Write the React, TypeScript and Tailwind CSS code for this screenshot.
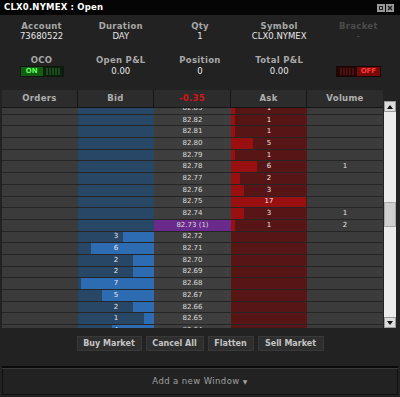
import React from 'react';

type Row = { price: string; bid?: number; ask?: number; vol?: number; last?: boolean };

const ROWS: Row[] = [
  { price: '82.83', ask: 1 },
  { price: '82.82', ask: 1 },
  { price: '82.81', ask: 1 },
  { price: '82.80', ask: 5 },
  { price: '82.79', ask: 1 },
  { price: '82.78', ask: 6, vol: 1 },
  { price: '82.77', ask: 2 },
  { price: '82.76', ask: 3 },
  { price: '82.75', ask: 17 },
  { price: '82.74', ask: 3, vol: 1 },
  { price: '82.73 (1)', ask: 1, vol: 2, last: true },
  { price: '82.72', bid: 3 },
  { price: '82.71', bid: 6 },
  { price: '82.70', bid: 2 },
  { price: '82.69', bid: 2 },
  { price: '82.68', bid: 7 },
  { price: '82.67', bid: 5 },
  { price: '82.66', bid: 2 },
  { price: '82.65', bid: 1 },
  { price: '82.64', bid: 4 },
];

const BUTTONS = [
  { label: 'Buy Market', w: 'w-[65px]' },
  { label: 'Cancel All', w: 'w-[58px]' },
  { label: 'Flatten', w: 'w-[46px]' },
  { label: 'Sell Market', w: 'w-[66px]' },
];

const Info: React.FC<{ label: string; value: React.ReactNode; dim?: boolean }> = ({ label, value, dim }) => (
  <div className="flex flex-col items-center">
    <div className={`h-[10px] leading-[10px] text-[8.5px] font-bold tracking-[0.3px] ${dim ? 'text-[#4a4a4a]' : 'text-[#a8a8a8]'}`}>{label}</div>
    <div className={`h-[10px] leading-[10px] text-[8.5px] ${dim ? 'text-[#5a5a5a]' : 'text-[#e6e6e6]'}`}>{value}</div>
  </div>
);

const Info2: React.FC<{ label: string; children: React.ReactNode }> = ({ label, children }) => (
  <div className="flex flex-col items-center">
    <div className="h-[10px] leading-[10px] text-[8.5px] font-bold tracking-[0.3px] text-[#a8a8a8]">{label}</div>
    <div className="h-[11px] mt-px flex items-center text-[8.5px] text-[#e6e6e6]">{children}</div>
  </div>
);

const Stripes: React.FC<{ color: string }> = ({ color }) => (
  <div className="flex-1 flex items-center justify-center gap-[1px]">
    {[0, 1, 2, 3, 4].map(i => (
      <span key={i} className="w-[2px] h-[7px]" style={{ background: color }} />
    ))}
  </div>
);

const ScrollArrow: React.FC<{ down?: boolean }> = ({ down }) => (
  <div className="h-[11px] w-[12px] shrink-0 bg-[#dcdcdc] border border-[#9a9a9a] flex items-center justify-center">
    <svg width="6" height="4" viewBox="0 0 6 4">
      {down ? <polygon points="0,0 6,0 3,4" fill="#111" /> : <polygon points="0,4 6,4 3,0" fill="#111" />}
    </svg>
  </div>
);

export default function App() {
  return (
    <div className="w-[400px] h-[397px] bg-[#222222] flex flex-col overflow-hidden" style={{ fontFamily: '"DejaVu Sans", Verdana, sans-serif' }}>
      {/* Title */}
      <div className="h-[15px] bg-[#050505] flex items-center justify-between pl-[4px] pr-[6px]">
        <span className="text-[8.5px] font-bold text-white tracking-[0.2px]">CLX0.NYMEX : Open</span>
        <div className="flex gap-[1px]">
          <svg width="8" height="8" viewBox="0 0 8 8">
            <rect x="0" y="0" width="8" height="8" fill="#9a9a9a" />
            <rect x="2" y="2" width="4" height="4" fill="#222" />
            <rect x="3" y="3" width="2" height="2" fill="#9a9a9a" />
          </svg>
          <svg width="8" height="8" viewBox="0 0 8 8">
            <rect x="0" y="0" width="8" height="8" fill="#9a9a9a" />
            <path d="M2 2 L6 6 M6 2 L2 6" stroke="#222" strokeWidth="1.4" />
          </svg>
        </div>
      </div>

      {/* Info */}
      <div className="px-[2px] pt-[6px]">
        <div className="grid grid-cols-5">
          <Info label="Account" value="73680522" />
          <Info label="Duration" value="DAY" />
          <Info label="Qty" value="1" />
          <Info label="Symbol" value="CLX0.NYMEX" />
          <Info label="Bracket" value="-" dim />
        </div>
        <div className="grid grid-cols-5 mt-[14px]">
          <Info2 label="OCO">
            <div className="w-[44px] h-[11px] flex border border-[#0b1a0b]">
              <div className="w-[22px] bg-[#145e14] text-[7px] font-bold text-[#5cff5c] flex items-center justify-center">ON</div>
              <div className="flex-1 bg-[#0c1f0c] flex"><Stripes color="#1e4a1e" /></div>
            </div>
          </Info2>
          <Info2 label="Open P&L">0.00</Info2>
          <Info2 label="Position">0</Info2>
          <Info2 label="Total P&L">0.00</Info2>
          <Info2 label="">
            <div className="w-[45px] h-[11px] flex border border-[#1a0505]">
              <div className="flex-1 bg-[#250606] flex"><Stripes color="#4a1010" /></div>
              <div className="w-[23px] bg-[#7a0a0a] text-[7px] font-bold text-[#ff3a3a] flex items-center justify-center">OFF</div>
            </div>
          </Info2>
        </div>
      </div>

      {/* Ladder */}
      <div className="mt-[13px] flex pl-[2px]">
        <div className="w-[381px] flex flex-col">
          <div className="h-[17px] flex bg-[#2c2c2c] text-[8.5px] font-bold tracking-[0.3px] text-[#b0b0b0]">
            <div className="w-[76px] flex items-center justify-center border-r border-[#161616]">Orders</div>
            <div className="w-[76px] flex items-center justify-center border-r border-[#161616]">Bid</div>
            <div className="w-[77px] flex items-center justify-center border-r border-[#161616] text-[#d41414]">-0.35</div>
            <div className="w-[76px] flex items-center justify-center border-r border-[#161616]">Ask</div>
            <div className="w-[76px] flex items-center justify-center">Volume</div>
          </div>
          <div className="h-[221px] overflow-hidden border-t border-[#151515]">
            <div className="-mt-[5px]">
              {ROWS.map(r => (
                <div key={r.price} className="h-[11.7px] flex text-[7px] leading-none border-b border-[#252525]">
                  <div className="w-[76px] bg-[#3b3b3b]" />
                  <div className="w-[76px] bg-[#284766] relative flex justify-end">
                    {r.bid ? (
                      <>
                        <div className="h-full bg-[#2d6cb3]" style={{ width: r.bid * 10.5 }} />
                        <span className="absolute inset-0 flex items-center justify-center text-[#e8e8e8]">{r.bid}</span>
                      </>
                    ) : null}
                  </div>
                  <div className={`w-[77px] flex items-center justify-center text-[#dcdcdc] ${r.last ? 'bg-[#6a2a8c]' : 'bg-[#3e3e3e]'}`}>{r.price}</div>
                  <div className="w-[76px] bg-[#581515] relative flex">
                    {r.ask ? (
                      <>
                        <div className="h-full bg-[#9a0f0f]" style={{ width: Math.min(r.ask * 4.4, 76) }} />
                        <span className="absolute inset-0 flex items-center justify-center text-[#e8e8e8]">{r.ask}</span>
                      </>
                    ) : null}
                  </div>
                  <div className="w-[76px] bg-[#3b3b3b] flex items-center justify-center text-[#e8e8e8]">{r.vol ?? ''}</div>
                </div>
              ))}
            </div>
          </div>
        </div>
        <div className="ml-px mt-[11px] h-[227px] w-[12px] bg-[#ececec] flex flex-col">
          <ScrollArrow />
          <div className="h-[90px] shrink-0" />
          <div className="h-[25px] shrink-0 bg-[#cfcfcf] border border-[#a8a8a8]" />
          <div className="flex-1" />
          <ScrollArrow down />
        </div>
      </div>

      {/* Buttons */}
      <div className="mt-[8px] flex justify-center gap-[4px]">
        {BUTTONS.map(b => (
          <div key={b.label} className={`${b.w} h-[15px] bg-[#2e2e2e] border border-[#383838] flex items-center justify-center text-[8px] font-bold text-[#c4c4c4] whitespace-nowrap`}>{b.label}</div>
        ))}
      </div>

      {/* Footer */}
      <div className="mt-[15px] mx-[2px] border-t-2 border-[#0a0a0a] border-b border-b-[#3a3a3a]" />
      <div className="flex-1 mx-[2px] mb-[2px] border border-[#111] border-t-0 flex items-center justify-center text-[8.5px] tracking-[0.4px] text-[#a0a0a0]">
        Add a new Window<span className="ml-[3px] text-[6px]">▼</span>
      </div>
    </div>
  );
}
